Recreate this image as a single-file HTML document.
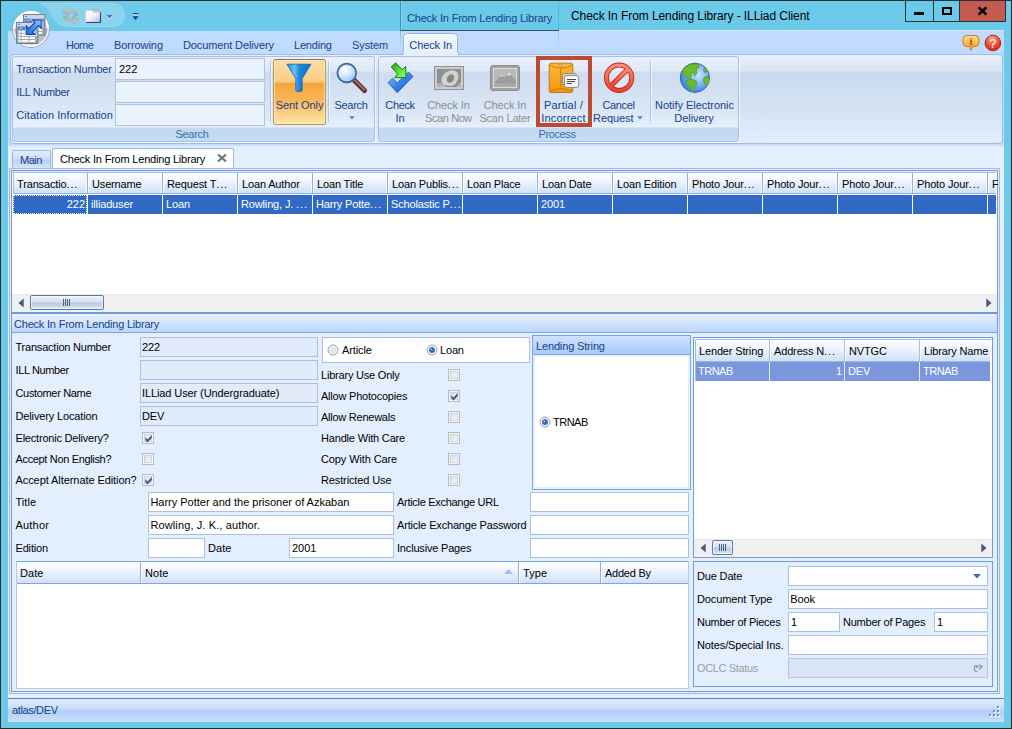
<!DOCTYPE html>
<html><head><meta charset="utf-8"><title>Check In From Lending Library - ILLiad Client</title>
<style>
html,body{margin:0;padding:0;}
body{width:1012px;height:729px;overflow:hidden;background:#6bcaea;font-family:"Liberation Sans",sans-serif;font-size:11px;}
#win{position:relative;width:1012px;height:729px;overflow:hidden;background:#6bcaea;}
#win div,#win svg{position:absolute;box-sizing:border-box;}
.t{overflow:visible;}

</style></head><body>
<div id="win">
<div  style="left:0px;top:0px;width:1012px;height:729px;border:1px solid #2b2b2b;background:#6bcaea;"></div>
<div class="t" style="left:571px;top:8.0px;height:16px;line-height:16px;font-size:12px;color:#000;letter-spacing:-0.08px;white-space:nowrap;">Check In From Lending Library - ILLiad Client</div>
<div  style="left:400px;top:1px;width:1px;height:30px;background:#3f8fb0;"></div>
<div  style="left:401px;top:1px;width:1px;height:29px;background:#8ad6f0;"></div>
<div class="t" style="left:407px;top:10.0px;height:16px;line-height:16px;font-size:11px;color:#15428b;letter-spacing:-0.204px;white-space:nowrap;">Check In From Lending Library</div>
<div  style="left:905px;top:0px;width:29px;height:22px;border:1px solid #25323a;background:#6bcaea;"></div>
<div  style="left:933px;top:0px;width:27px;height:22px;border:1px solid #25323a;border-left:none;background:#6bcaea;"></div>
<div  style="left:959px;top:0px;width:47px;height:22px;border:1px solid #25323a;border-left:none;background:#c55a50;"></div>
<div  style="left:933px;top:1px;width:1px;height:20px;background:#25323a;"></div>
<div  style="left:959px;top:1px;width:1px;height:20px;background:#25323a;"></div>
<div  style="left:914px;top:12px;width:10px;height:3px;background:#000;"></div>
<div  style="left:942px;top:7px;width:10px;height:8px;border:2px solid #000;border-top-width:2px;"></div>
<svg style="left:977px;top:6px;" width="11" height="10" viewBox="0 0 11 10"><path d="M1.600 1.300 L9.400 8.700 M9.400 1.300 L1.600 8.700" stroke="#000" stroke-width="2.500" fill="none"/></svg>
<svg style="left:40px;top:2px;" width="92" height="27" viewBox="0 0 92 27"><path d="M0 1.500 H72 Q84.500 1.500 84.500 13 Q84.500 24.500 72 24.500 H30 Q17 24.500 12 13 Q8 4 0 1.500 Z" fill="#8ad3ed" stroke="#98d9f0" stroke-width="1"/></svg>
<svg style="left:62px;top:7px;" width="18" height="18" viewBox="0 0 18 18"><defs><linearGradient id="rg" x1="0" y1="0" x2="0" y2="1"><stop offset="0" stop-color="#d6d6d6"/><stop offset="1" stop-color="#a4a4a4"/></linearGradient></defs><path d="M0.6 5.6 L6.2 0.8 L6.2 3 Q13.800 1.800 16 8.200 L13.200 8.600 Q11.200 4.800 6.200 5.600 L6.200 8.600 Z" fill="url(#rg)" stroke="#9a9a9a" stroke-width="0.5"/><path transform="rotate(180 8.700 8.900)" d="M0.6 5.6 L6.2 0.8 L6.2 3 Q13.800 1.800 16 8.200 L13.200 8.600 Q11.200 4.800 6.200 5.600 L6.200 8.600 Z" fill="url(#rg)" stroke="#9a9a9a" stroke-width="0.5"/></svg>
<svg style="left:85px;top:9px;" width="17" height="15" viewBox="0 0 17 15"><defs><linearGradient id="fg" x1="0" y1="0" x2="1" y2="1"><stop offset="0" stop-color="#ffffff"/><stop offset="0.45" stop-color="#f4f6fc"/><stop offset="1" stop-color="#aab8dc"/></linearGradient></defs>
<rect x="8" y="0.8" width="6.500" height="3.400" fill="#c4c6cc" stroke="#9a9ea8" stroke-width="0.6"/>
<path d="M0.6 1.600 H7.400 L8.400 3.400 H15.400 V13.400 H0.600 Z" fill="url(#fg)"/>
<path d="M0.6 13.500 H15.500 V3.400" fill="none" stroke="#33447a" stroke-width="1.100"/><path d="M0.6 13.500 V1.600 H7.400" fill="none" stroke="#c9d2ea" stroke-width="0.8"/></svg>
<svg style="left:106px;top:14px;" width="7" height="6" viewBox="0 0 7 6"><path d="M0.6 1 H6.400 L3.500 4.600 Z" fill="#4678b8"/><path d="M0.8 2.200 L3.500 5.600 L6.200 2.200" fill="none" stroke="#d8eefa" stroke-width="0.7"/></svg>
<svg style="left:132px;top:12px;" width="7" height="9" viewBox="0 0 7 9"><rect x="0.8" y="1" width="5.400" height="1.400" fill="#1b3a8b"/><rect x="0.8" y="2.400" width="5.400" height="1" fill="#e8f6ff"/><path d="M0.4 4.300 H6.600 L3.500 7.900 Z" fill="#1b3a8b"/></svg>
<div  style="left:8px;top:31px;width:996px;height:24px;background:#bfdbff;"></div>
<div  style="left:401px;top:30px;width:158px;height:1px;background:#2f5563;"></div>
<div  style="left:559px;top:30px;width:445px;height:1px;background:#cfeaf8;"></div>
<div  style="left:558px;top:2px;width:1px;height:28px;background:#58b6da;"></div>
<div  style="left:558px;top:31px;width:1px;height:20px;background:linear-gradient(#9cc0ee,#bfdbff);"></div>
<div  style="left:400px;top:31px;width:1px;height:20px;background:linear-gradient(#8fb4e6,#bfdbff);"></div>
<div class="t" style="left:66px;top:37.0px;height:16px;line-height:16px;font-size:11px;color:#15428b;letter-spacing:-0.5px;white-space:nowrap;">Home</div>
<div class="t" style="left:114px;top:37.0px;height:16px;line-height:16px;font-size:11px;color:#15428b;letter-spacing:-0.066px;white-space:nowrap;">Borrowing</div>
<div class="t" style="left:183px;top:37.0px;height:16px;line-height:16px;font-size:11px;color:#15428b;letter-spacing:-0.12px;white-space:nowrap;">Document Delivery</div>
<div class="t" style="left:294px;top:37.0px;height:16px;line-height:16px;font-size:11px;color:#15428b;letter-spacing:-0.193px;white-space:nowrap;">Lending</div>
<div class="t" style="left:352px;top:37.0px;height:16px;line-height:16px;font-size:11px;color:#15428b;letter-spacing:-0.078px;white-space:nowrap;">System</div>
<svg style="left:400px;top:32px;" width="62" height="23" viewBox="0 0 62 23"><defs><linearGradient id="tb" x1="0" y1="0" x2="0" y2="1"><stop offset="0" stop-color="#f4f8fe"/><stop offset="1" stop-color="#e3edfa"/></linearGradient></defs>
<path d="M0.5 22.500 Q3.500 22 3.500 18 V5.500 Q3.500 1.500 7.500 1.500 H53.500 Q57.500 1.500 57.500 5.500 V18 Q57.500 22 60.500 22.500 V23 H0.500 Z" fill="url(#tb)" stroke="#8db2e3" stroke-width="1"/>
<path d="M4.500 18 V6 Q4.500 2.500 8 2.500 H53 Q56.500 2.500 56.500 6 V18" fill="none" stroke="#ffffff" stroke-width="1" opacity="0.9"/></svg>
<div class="t" style="left:409.3px;top:37.0px;height:16px;line-height:16px;font-size:11px;color:#15428b;letter-spacing:-0.089px;white-space:nowrap;">Check In</div>
<svg style="left:961px;top:33px;" width="20" height="20" viewBox="0 0 20 20"><defs><linearGradient id="ig" x1="0" y1="0" x2="0" y2="1"><stop offset="0" stop-color="#ffe09a"/><stop offset="0.5" stop-color="#fbb848"/><stop offset="1" stop-color="#f0901e"/></linearGradient></defs>
<path d="M6 2.500 H14 Q18 2.500 18 6.500 V9.500 Q18 13.500 14 13.500 H12.500 L9.300 17.600 L9 13.500 H6 Q2 13.500 2 9.500 V6.500 Q2 2.500 6 2.500 Z" fill="url(#ig)" stroke="#d07a1c" stroke-width="1"/>
<text x="10" y="12" font-family="Liberation Serif,serif" font-weight="bold" font-size="11" fill="#b8480e" text-anchor="middle">i</text></svg>
<svg style="left:984px;top:34px;" width="18" height="18" viewBox="0 0 18 18"><defs><radialGradient id="hg" cx="0.45" cy="0.25" r="0.85"><stop offset="0" stop-color="#ffa488"/><stop offset="0.55" stop-color="#ea4a30"/><stop offset="1" stop-color="#c8200e"/></radialGradient></defs>
<circle cx="8.900" cy="9" r="7.800" fill="url(#hg)" stroke="#b02a18" stroke-width="1"/>
<text x="8.900" y="13.800" font-family="Liberation Sans,sans-serif" font-size="13" fill="#fff" text-anchor="middle">?</text></svg>
<div  style="left:8px;top:54px;width:996px;height:92px;background:#bfdbff;"></div>
<div  style="left:10px;top:54px;width:993px;height:90px;border:1px solid #9dbbe6;border-radius:4px;background:linear-gradient(#e6eef9 0px,#dbe6f4 16px,#c8d9ed 17px,#d6e4f5 60px,#e4efff 90px);"></div>
<div  style="left:404px;top:54px;width:54px;height:1px;background:#e4edfa;"></div>
<div  style="left:8px;top:145px;width:996px;height:577px;background:linear-gradient(#c9dcf5 0px,#e3efff 2px);"></div>
<div  style="left:12px;top:56px;width:363px;height:86px;border:1px solid #a8c0e0;border-radius:3px;background:linear-gradient(#e8f0fb 0px,#dfe9f6 14px,#cddcef 15px,#dbe7f6 55px,#e6f0fd 70px,#c3d9f2 71px,#c6dbf4 85px);box-shadow:1px 1px 0 rgba(255,255,255,0.7);"></div>
<div class="t" style="left:92.0px;top:126.0px;height:16px;line-height:16px;font-size:11px;color:#3e6aaa;letter-spacing:-0.312px;white-space:nowrap;width:200px;text-align:center;">Search</div>
<div  style="left:378px;top:56px;width:361px;height:86px;border:1px solid #a8c0e0;border-radius:3px;background:linear-gradient(#e8f0fb 0px,#dfe9f6 14px,#cddcef 15px,#dbe7f6 55px,#e6f0fd 70px,#c3d9f2 71px,#c6dbf4 85px);box-shadow:1px 1px 0 rgba(255,255,255,0.7);"></div>
<div class="t" style="left:457.0px;top:126.0px;height:16px;line-height:16px;font-size:11px;color:#3e6aaa;letter-spacing:-0.375px;white-space:nowrap;width:200px;text-align:center;">Process</div>
<div class="t" style="left:16.3px;top:61.0px;height:16px;line-height:16px;font-size:11px;color:#15428b;letter-spacing:-0.215px;white-space:nowrap;">Transaction Number</div>
<div  style="left:115px;top:58px;width:150px;height:22px;border:1px solid #adc3e2;background:#eaf2fc;"></div>
<div class="t" style="left:16.3px;top:84.0px;height:16px;line-height:16px;font-size:11px;color:#15428b;letter-spacing:-0.385px;white-space:nowrap;">ILL Number</div>
<div  style="left:115px;top:81px;width:150px;height:22px;border:1px solid #adc3e2;background:#eaf2fc;"></div>
<div class="t" style="left:16.3px;top:107.0px;height:16px;line-height:16px;font-size:11px;color:#15428b;letter-spacing:0.064px;white-space:nowrap;">Citation Information</div>
<div  style="left:115px;top:104px;width:150px;height:22px;border:1px solid #adc3e2;background:#eaf2fc;"></div>
<div class="t" style="left:119px;top:61.0px;height:16px;line-height:16px;font-size:11px;color:#000;letter-spacing:0px;white-space:nowrap;">222</div>
<div  style="left:270px;top:61px;width:1px;height:61px;background:#b0c6e4;"></div>
<div  style="left:271px;top:61px;width:1px;height:61px;background:#eef4fd;"></div>
<div  style="left:328px;top:61px;width:1px;height:61px;background:#b0c6e4;"></div>
<div  style="left:329px;top:61px;width:1px;height:61px;background:#eef4fd;"></div>
<div  style="left:273px;top:59px;width:53px;height:66px;border:1px solid #b89a5c;border-top-color:#8e7a56;border-radius:3px;background:linear-gradient(#fbdcaa 0px,#f9cd86 22px,#f8a53c 23px,#f9b559 40px,#fde6a6 64px);box-shadow:inset 0 0 0 1px rgba(255,240,200,0.55);"></div>
<svg style="left:286px;top:63px;" width="26" height="30" viewBox="0 0 26 30"><defs><linearGradient id="fn" x1="0" y1="0" x2="1" y2="0"><stop offset="0" stop-color="#1c8be0"/><stop offset="0.32" stop-color="#6fc0f8"/><stop offset="0.5" stop-color="#1c86dc"/><stop offset="1" stop-color="#0d72cf"/></linearGradient></defs>
<path d="M1 1.200 H25 L16.200 15.500 V27.800 Q13 29.600 9.800 27.800 V15.500 Z" fill="url(#fn)" stroke="#0a63b8" stroke-width="0.8"/></svg>
<div class="t" style="left:199.5px;top:97.0px;height:16px;line-height:16px;font-size:11px;color:#15428b;letter-spacing:-0.064px;white-space:nowrap;width:200px;text-align:center;">Sent Only</div>
<svg style="left:334px;top:61px;" width="36" height="36" viewBox="0 0 36 36"><defs><radialGradient id="lg" cx="0.35" cy="0.3" r="0.8"><stop offset="0" stop-color="#ffffff"/><stop offset="0.45" stop-color="#d6eafc"/><stop offset="1" stop-color="#86bdf0"/></radialGradient></defs>
<path d="M20.5 19.500 L30.500 29.500" stroke="#5c2a26" stroke-width="5" stroke-linecap="round"/><path d="M21 19.500 L30.300 28.800" stroke="#a86a62" stroke-width="2" stroke-linecap="round"/>
<circle cx="12.8" cy="12" r="9.300" fill="url(#lg)" stroke="#3a66a4" stroke-width="1.900"/><circle cx="12.800" cy="12" r="8" fill="none" stroke="#bcd8f6" stroke-width="0.8"/></svg>
<div class="t" style="left:251px;top:97.0px;height:16px;line-height:16px;font-size:11px;color:#15428b;letter-spacing:-0.312px;white-space:nowrap;width:200px;text-align:center;">Search</div>
<svg style="left:349px;top:116px;" width="6" height="4" viewBox="0 0 6 4"><path d="M0.3 0.3 H5.700 L3 3.600 Z" fill="#5d7fb0"/></svg>
<svg style="left:385px;top:60px;" width="30" height="35" viewBox="0 0 30 35"><defs><linearGradient id="ck" x1="0" y1="0" x2="1" y2="1"><stop offset="0" stop-color="#8cc4fa"/><stop offset="0.5" stop-color="#3585e8"/><stop offset="1" stop-color="#134fc0"/></linearGradient>
<linearGradient id="ga" x1="0" y1="0" x2="1" y2="1"><stop offset="0" stop-color="#1f9a14"/><stop offset="0.55" stop-color="#5fe23c"/><stop offset="1" stop-color="#a8f87c"/></linearGradient></defs>
<path d="M3 22.700 L7.500 18.200 L12.300 22.700 L23.500 12 L27.900 16.600 L12.300 32.700 Z" fill="url(#ck)" stroke="#1a55c0" stroke-width="0.8" stroke-linejoin="round"/>
<path d="M6.1 7.100 L10.600 2.800 L17.200 9.600 L20.800 6.500 L20.800 17.600 L9.700 17.600 L12.800 14 Z" fill="url(#ga)" stroke="#17850e" stroke-width="1" stroke-linejoin="round"/></svg>
<div class="t" style="left:300px;top:97.0px;height:16px;line-height:16px;font-size:11px;color:#15428b;letter-spacing:-0.372px;white-space:nowrap;width:200px;text-align:center;">Check</div>
<div class="t" style="left:300px;top:110.0px;height:16px;line-height:16px;font-size:11px;color:#15428b;letter-spacing:-0.2px;white-space:nowrap;width:200px;text-align:center;">In</div>
<svg style="left:434px;top:66px;" width="30" height="24" viewBox="0 0 30 24"><rect x="0.5" y="0.5" width="29" height="23" fill="#cdcdcd" stroke="#929292"/><rect x="3" y="3" width="24" height="18" fill="#8f8f8f"/>
<path d="M9 19 Q5 12 11 7 Q17 2 23 6 Q26 10 23 15 Q22 19 17 20 Z" fill="#d2d2d2"/><ellipse cx="16.500" cy="12.500" rx="3.300" ry="4.400" transform="rotate(25 16.5 12.5)" fill="#858585"/><path d="M3 18 Q8 15 12 21 H3 Z M22 21 L27 16 V21 Z" fill="#b4b4b4"/></svg>
<div class="t" style="left:348.5px;top:97.0px;height:16px;line-height:16px;font-size:11px;color:#8d8d8d;letter-spacing:-0.089px;white-space:nowrap;width:200px;text-align:center;">Check In</div>
<div class="t" style="left:348.5px;top:110.0px;height:16px;line-height:16px;font-size:11px;color:#8d8d8d;letter-spacing:-0.42px;white-space:nowrap;width:200px;text-align:center;">Scan Now</div>
<svg style="left:490px;top:65px;" width="30" height="26" viewBox="0 0 30 26"><rect x="0.5" y="0.5" width="29" height="25" rx="2.500" fill="#a2a2a2" stroke="#8c8c8c"/><rect x="3.500" y="3.500" width="23" height="19" fill="#b9b9b9" stroke="#dcdcdc"/>
<path d="M4 19 L11 9 L14.500 13 L19 7 L26 16 V22 H4 Z" fill="#9d9d9d"/><path d="M11 9 L13 11.500 L9.500 11.500 Z M19 7 L21.500 10.500 L17 10.500 Z" fill="#e2e2e2"/><rect x="4" y="18.500" width="22" height="3.500" fill="#aaaaaa"/></svg>
<div class="t" style="left:405px;top:97.0px;height:16px;line-height:16px;font-size:11px;color:#8d8d8d;letter-spacing:-0.089px;white-space:nowrap;width:200px;text-align:center;">Check In</div>
<div class="t" style="left:405px;top:110.0px;height:16px;line-height:16px;font-size:11px;color:#8d8d8d;letter-spacing:-0.211px;white-space:nowrap;width:200px;text-align:center;">Scan Later</div>
<div  style="left:536px;top:56px;width:56px;height:71px;border:4px solid #be4a32;"></div>
<svg style="left:548px;top:62px;" width="32" height="32" viewBox="0 0 32 32"><defs><linearGradient id="ev" x1="0" y1="0" x2="0" y2="1"><stop offset="0" stop-color="#fbb836"/><stop offset="1" stop-color="#f5960c"/></linearGradient></defs>
<rect x="1.200" y="1.200" width="23.600" height="29.300" rx="2" fill="url(#ev)" stroke="#c8780c" stroke-width="1"/>
<path d="M1.800 3 Q12.700 9.500 24.200 3" fill="none" stroke="#c8780c" stroke-width="0.9"/><path d="M1.800 29 Q12.700 24.500 24.200 29" fill="none" stroke="#c8780c" stroke-width="0.9"/><path d="M12.700 6.300 V26.600" stroke="#c8780c" stroke-width="0.9"/>
<circle cx="12.700" cy="3.300" r="1.100" fill="#fff" stroke="#6a3c08" stroke-width="0.5"/>
<rect x="14.500" y="11.500" width="14" height="11.500" rx="2" fill="#d4d4d4" stroke="#8c8c8c"/><rect x="16.500" y="13.600" width="14.200" height="11.800" rx="2" fill="#f8f8f8" stroke="#8a8a8a"/>
<path d="M19 17.500 H28 M19 19.500 H27 M19 21.500 H24" stroke="#4a4a4a" stroke-width="1"/></svg>
<div class="t" style="left:463.5px;top:97.0px;height:16px;line-height:16px;font-size:11px;color:#15428b;letter-spacing:0.213px;white-space:nowrap;width:200px;text-align:center;">Partial /</div>
<div class="t" style="left:463.5px;top:110.0px;height:16px;line-height:16px;font-size:11px;color:#15428b;letter-spacing:0.2px;white-space:nowrap;width:200px;text-align:center;">Incorrect</div>
<svg style="left:602px;top:61px;" width="34" height="34" viewBox="0 0 34 34"><defs><linearGradient id="cg" x1="0" y1="0" x2="0" y2="1"><stop offset="0" stop-color="#f7907c"/><stop offset="1" stop-color="#e8452e"/></linearGradient></defs>
<circle cx="17.100" cy="16.800" r="12.700" fill="rgba(255,255,255,0.25)" stroke="#c8281c" stroke-width="5"/><path d="M8.300 25.600 L25.900 8" stroke="#c8281c" stroke-width="5"/>
<circle cx="17.100" cy="16.800" r="12.700" fill="none" stroke="url(#cg)" stroke-width="3.200"/><path d="M8.300 25.600 L25.900 8" stroke="url(#cg)" stroke-width="3.200"/></svg>
<div class="t" style="left:518.5px;top:97.0px;height:16px;line-height:16px;font-size:11px;color:#15428b;letter-spacing:-0.35px;white-space:nowrap;width:200px;text-align:center;">Cancel</div>
<div class="t" style="left:593px;top:110.0px;height:16px;line-height:16px;font-size:11px;color:#15428b;letter-spacing:-0.064px;white-space:nowrap;">Request</div>
<svg style="left:637px;top:116px;" width="6" height="4" viewBox="0 0 6 4"><path d="M0.3 0.3 H5.700 L3 3.600 Z" fill="#5d7fb0"/></svg>
<div  style="left:650px;top:61px;width:1px;height:61px;background:#b0c6e4;"></div>
<div  style="left:651px;top:61px;width:1px;height:61px;background:#eef4fd;"></div>
<svg style="left:679px;top:62px;" width="33" height="33" viewBox="0 0 33 33"><defs><radialGradient id="gl" cx="0.62" cy="0.4" r="0.75"><stop offset="0" stop-color="#cfe6ff"/><stop offset="0.5" stop-color="#6aaef4"/><stop offset="1" stop-color="#2a6ee0"/></radialGradient><clipPath id="gc"><circle cx="15.900" cy="15.800" r="14.600"/></clipPath></defs>
<circle cx="15.900" cy="15.800" r="14.600" fill="url(#gl)" stroke="#2a5fd0" stroke-width="1"/>
<g clip-path="url(#gc)" fill="#6cba2e" stroke="#3f9a1e" stroke-width="0.7" stroke-linejoin="round">
<polygon points="3.6,7.0 10.7,2.3 19.0,1.7 20.2,5.3 17.2,7.0 17.8,11.8 15.4,14.2 14.8,10.0 11.9,11.8 11.9,15.9 8.3,16.500 5.900,13.600 3.0,11.8"/>
<polygon points="8.3,18.3 11.9,17.1 17.2,18.9 17.8,22.500 15.400,25.400 15.200,29.600 12.500,29.600 11.600,25.400 7.700,23.100 7.100,20.100"/>
<polygon points="24.3,7.0 26.7,5.900 28.500,9.400 25.500,10.600"/>
<polygon points="26.1,14.8 29.7,14.2 30.900,19.500 27.900,23.600 24.900,20.700 24.300,17.100"/></g></svg>
<div class="t" style="left:594.5px;top:97.0px;height:16px;line-height:16px;font-size:11px;color:#15428b;letter-spacing:-0.03px;white-space:nowrap;width:200px;text-align:center;">Notify Electronic</div>
<div class="t" style="left:594px;top:110.0px;height:16px;line-height:16px;font-size:11px;color:#15428b;letter-spacing:-0.048px;white-space:nowrap;width:200px;text-align:center;">Delivery</div>
<svg style="left:10px;top:8px;" width="42" height="42" viewBox="0 0 42 42"><defs><linearGradient id="ab" x1="0" y1="0" x2="0" y2="1"><stop offset="0" stop-color="#ffffff"/><stop offset="0.46" stop-color="#e4e9ef"/><stop offset="0.5" stop-color="#a9b3c1"/><stop offset="0.8" stop-color="#bcc5d1"/><stop offset="1" stop-color="#eef1f5"/></linearGradient>
<linearGradient id="ar" x1="0" y1="1" x2="1" y2="0"><stop offset="0" stop-color="#1769d6"/><stop offset="0.5" stop-color="#3f97ee"/><stop offset="1" stop-color="#8ccdfa"/></linearGradient></defs>
<circle cx="21" cy="21" r="18.5" fill="url(#ab)" stroke="#9aa6b6" stroke-width="1"/>
<circle cx="21" cy="21" r="17.2" fill="none" stroke="#ffffff" stroke-width="1.4" opacity="0.85"/><rect x="13.5" y="6.5" width="21.5" height="20.5" fill="#9ea7b4" stroke="#76828f" stroke-width="1"/><rect x="14.0" y="7.0" width="20.5" height="3.2" fill="#cbd5f5"/><rect x="15.0" y="7.8" width="2" height="0.9" fill="#5b6680"/><rect x="15.0" y="11.1" width="18.5" height="2.600" fill="#2c78d4"/><rect x="16.0" y="11.7" width="4" height="1.2" fill="#8cc4f4"/><rect x="15.5" y="14.7" width="2" height="2.100" fill="#fff"/><rect x="18.5" y="14.7" width="6.9" height="2.100" fill="#fff"/><rect x="26.4" y="14.7" width="5.6" height="2.100" fill="#fff"/><rect x="15.5" y="17.8" width="2" height="2.100" fill="#fff"/><rect x="18.5" y="17.8" width="6.9" height="2.100" fill="#fff"/><rect x="26.4" y="17.8" width="5.6" height="2.100" fill="#fff"/><rect x="15.5" y="20.9" width="2" height="2.100" fill="#fff"/><rect x="18.5" y="20.9" width="6.9" height="2.100" fill="#fff"/><rect x="26.4" y="20.9" width="5.6" height="2.100" fill="#fff"/><rect x="15.5" y="24.0" width="2" height="2.100" fill="#fff"/><rect x="18.5" y="24.0" width="6.9" height="2.100" fill="#fff"/><rect x="26.4" y="24.0" width="5.6" height="2.100" fill="#fff"/><rect x="6.5" y="14.5" width="21.5" height="21" fill="#9ea7b4" stroke="#76828f" stroke-width="1"/><rect x="7.0" y="15.0" width="20.5" height="3.2" fill="#cbd5f5"/><rect x="8.0" y="15.8" width="2" height="0.9" fill="#5b6680"/><rect x="8.0" y="19.1" width="18.5" height="2.600" fill="#2c78d4"/><rect x="9.0" y="19.7" width="4" height="1.2" fill="#8cc4f4"/><rect x="8.5" y="22.7" width="2" height="2.100" fill="#fff"/><rect x="11.5" y="22.7" width="6.9" height="2.100" fill="#fff"/><rect x="19.4" y="22.7" width="5.6" height="2.100" fill="#fff"/><rect x="8.5" y="25.8" width="2" height="2.100" fill="#fff"/><rect x="11.5" y="25.8" width="6.9" height="2.100" fill="#fff"/><rect x="19.4" y="25.8" width="5.6" height="2.100" fill="#fff"/><rect x="8.5" y="28.9" width="2" height="2.100" fill="#fff"/><rect x="11.5" y="28.9" width="6.9" height="2.100" fill="#fff"/><rect x="19.4" y="28.9" width="5.6" height="2.100" fill="#fff"/><rect x="8.5" y="32.0" width="2" height="2.100" fill="#fff"/><rect x="11.5" y="32.0" width="6.9" height="2.100" fill="#fff"/><rect x="19.4" y="32.0" width="5.6" height="2.100" fill="#fff"/><path d="M16.2 17.600 L16.200 26.500 L25.100 26.500 L22.600 24 L28.700 17.900 L31.200 20.400 L31.200 11.900 L22.300 11.900 L24.800 14.400 L18.700 20.500 Z" fill="url(#ar)" stroke="#ffffff" stroke-width="2.200" stroke-linejoin="miter"/>
<path d="M16.2 17.600 L16.200 26.500 L25.100 26.500 L22.600 24 L28.700 17.900 L31.200 20.400 L31.200 11.900 L22.300 11.900 L24.800 14.400 L18.700 20.500 Z" fill="url(#ar)" stroke="#123f9e" stroke-width="1.100" stroke-linejoin="miter"/></svg>
<div  style="left:12px;top:150px;width:39px;height:19px;border:1px solid #9ab8e0;border-bottom:none;border-radius:2px 2px 0 0;background:linear-gradient(#e2edfc 0%,#d0e1f9 40%,#b9d2f4 55%,#c6dbf7 75%,#dbe8fb 100%);"></div>
<div class="t" style="left:20px;top:152.0px;height:16px;line-height:16px;font-size:11px;color:#15428b;letter-spacing:-0.481px;white-space:nowrap;">Main</div>
<div  style="left:52px;top:148px;width:182px;height:22px;border:1px solid #9ab8e0;border-bottom:none;border-radius:2px 2px 0 0;background:#fdfeff;"></div>
<div class="t" style="left:60px;top:151.0px;height:16px;line-height:16px;font-size:11px;color:#000;letter-spacing:-0.204px;white-space:nowrap;">Check In From Lending Library</div>
<svg style="left:216px;top:153px;" width="12" height="10" viewBox="0 0 12 10"><path d="M2 1.500 L10 8.500 M10 1.500 L2 8.500" stroke="#757575" stroke-width="2.3" fill="none"/></svg>
<div  style="left:9px;top:168px;width:991px;height:526px;border:1px solid #a9b9d4;background:#e3efff;"></div>
<div  style="left:11px;top:170px;width:987px;height:522px;border:1px solid #6f9bd8;background:#e3efff;"></div>
<div  style="left:12px;top:171px;width:985px;height:142px;background:#fff;border-top:1px solid #e3efff;"></div>
<div  style="left:13px;top:172px;width:983px;height:1px;background:#9dbbe6;"></div>
<div  style="left:13px;top:173px;width:983px;height:21px;background:linear-gradient(#fdfeff 0%,#f1f6fe 35%,#dce9fb 75%,#cfe0f8 100%);border-bottom:1px solid #8fb0e0;border-left:1px solid #9dbbe6;"></div>
<div  style="left:13px;top:195px;width:983px;height:19px;background:#316ac5;"></div>
<div class="t" style="left:17px;top:176.0px;height:16px;line-height:16px;font-size:11px;color:#000;letter-spacing:-0.15px;white-space:nowrap;overflow:hidden;width:70px;text-align:left;">Transactio<span style="letter-spacing:0.9px">...</span></div>
<div class="t" style="left:15px;top:196.0px;height:16px;line-height:16px;font-size:11px;color:#fff;letter-spacing:0px;white-space:nowrap;width:70px;text-align:right;">222</div>
<div  style="left:87px;top:173px;width:1px;height:21px;background:#8fb0e0;"></div>
<div  style="left:88px;top:173px;width:1px;height:20px;background:#fff;"></div>
<div  style="left:86px;top:173px;width:1px;height:20px;background:#f4f8ff;"></div>
<div  style="left:87px;top:195px;width:1px;height:19px;background:#fff;"></div>
<div class="t" style="left:92px;top:176.0px;height:16px;line-height:16px;font-size:11px;color:#000;letter-spacing:-0.15px;white-space:nowrap;overflow:hidden;width:70px;text-align:left;">Username</div>
<div class="t" style="left:91px;top:196.0px;height:16px;line-height:16px;font-size:11px;color:#fff;letter-spacing:-0.15px;white-space:nowrap;overflow:hidden;width:70px;text-align:left;">illiaduser</div>
<div  style="left:162px;top:173px;width:1px;height:21px;background:#8fb0e0;"></div>
<div  style="left:163px;top:173px;width:1px;height:20px;background:#fff;"></div>
<div  style="left:161px;top:173px;width:1px;height:20px;background:#f4f8ff;"></div>
<div  style="left:162px;top:195px;width:1px;height:19px;background:#fff;"></div>
<div class="t" style="left:167px;top:176.0px;height:16px;line-height:16px;font-size:11px;color:#000;letter-spacing:-0.15px;white-space:nowrap;overflow:hidden;width:70px;text-align:left;">Request T<span style="letter-spacing:0.9px">...</span></div>
<div class="t" style="left:166px;top:196.0px;height:16px;line-height:16px;font-size:11px;color:#fff;letter-spacing:-0.15px;white-space:nowrap;overflow:hidden;width:70px;text-align:left;">Loan</div>
<div  style="left:237px;top:173px;width:1px;height:21px;background:#8fb0e0;"></div>
<div  style="left:238px;top:173px;width:1px;height:20px;background:#fff;"></div>
<div  style="left:236px;top:173px;width:1px;height:20px;background:#f4f8ff;"></div>
<div  style="left:237px;top:195px;width:1px;height:19px;background:#fff;"></div>
<div class="t" style="left:242px;top:176.0px;height:16px;line-height:16px;font-size:11px;color:#000;letter-spacing:-0.15px;white-space:nowrap;overflow:hidden;width:70px;text-align:left;">Loan Author</div>
<div class="t" style="left:241px;top:196.0px;height:16px;line-height:16px;font-size:11px;color:#fff;letter-spacing:-0.15px;white-space:nowrap;overflow:hidden;width:70px;text-align:left;">Rowling, J. <span style="letter-spacing:0.9px">...</span></div>
<div  style="left:312px;top:173px;width:1px;height:21px;background:#8fb0e0;"></div>
<div  style="left:313px;top:173px;width:1px;height:20px;background:#fff;"></div>
<div  style="left:311px;top:173px;width:1px;height:20px;background:#f4f8ff;"></div>
<div  style="left:312px;top:195px;width:1px;height:19px;background:#fff;"></div>
<div class="t" style="left:317px;top:176.0px;height:16px;line-height:16px;font-size:11px;color:#000;letter-spacing:-0.15px;white-space:nowrap;overflow:hidden;width:70px;text-align:left;">Loan Title</div>
<div class="t" style="left:316px;top:196.0px;height:16px;line-height:16px;font-size:11px;color:#fff;letter-spacing:-0.15px;white-space:nowrap;overflow:hidden;width:70px;text-align:left;">Harry Potte<span style="letter-spacing:0.9px">...</span></div>
<div  style="left:387px;top:173px;width:1px;height:21px;background:#8fb0e0;"></div>
<div  style="left:388px;top:173px;width:1px;height:20px;background:#fff;"></div>
<div  style="left:386px;top:173px;width:1px;height:20px;background:#f4f8ff;"></div>
<div  style="left:387px;top:195px;width:1px;height:19px;background:#fff;"></div>
<div class="t" style="left:392px;top:176.0px;height:16px;line-height:16px;font-size:11px;color:#000;letter-spacing:-0.15px;white-space:nowrap;overflow:hidden;width:70px;text-align:left;">Loan Publis<span style="letter-spacing:0.9px">...</span></div>
<div class="t" style="left:391px;top:196.0px;height:16px;line-height:16px;font-size:11px;color:#fff;letter-spacing:-0.15px;white-space:nowrap;overflow:hidden;width:70px;text-align:left;">Scholastic P<span style="letter-spacing:0.9px">...</span></div>
<div  style="left:462px;top:173px;width:1px;height:21px;background:#8fb0e0;"></div>
<div  style="left:463px;top:173px;width:1px;height:20px;background:#fff;"></div>
<div  style="left:461px;top:173px;width:1px;height:20px;background:#f4f8ff;"></div>
<div  style="left:462px;top:195px;width:1px;height:19px;background:#fff;"></div>
<div class="t" style="left:467px;top:176.0px;height:16px;line-height:16px;font-size:11px;color:#000;letter-spacing:-0.15px;white-space:nowrap;overflow:hidden;width:70px;text-align:left;">Loan Place</div>
<div  style="left:537px;top:173px;width:1px;height:21px;background:#8fb0e0;"></div>
<div  style="left:538px;top:173px;width:1px;height:20px;background:#fff;"></div>
<div  style="left:536px;top:173px;width:1px;height:20px;background:#f4f8ff;"></div>
<div  style="left:537px;top:195px;width:1px;height:19px;background:#fff;"></div>
<div class="t" style="left:542px;top:176.0px;height:16px;line-height:16px;font-size:11px;color:#000;letter-spacing:-0.15px;white-space:nowrap;overflow:hidden;width:70px;text-align:left;">Loan Date</div>
<div class="t" style="left:541px;top:196.0px;height:16px;line-height:16px;font-size:11px;color:#fff;letter-spacing:-0.15px;white-space:nowrap;overflow:hidden;width:70px;text-align:left;">2001</div>
<div  style="left:612px;top:173px;width:1px;height:21px;background:#8fb0e0;"></div>
<div  style="left:613px;top:173px;width:1px;height:20px;background:#fff;"></div>
<div  style="left:611px;top:173px;width:1px;height:20px;background:#f4f8ff;"></div>
<div  style="left:612px;top:195px;width:1px;height:19px;background:#fff;"></div>
<div class="t" style="left:617px;top:176.0px;height:16px;line-height:16px;font-size:11px;color:#000;letter-spacing:-0.15px;white-space:nowrap;overflow:hidden;width:70px;text-align:left;">Loan Edition</div>
<div  style="left:687px;top:173px;width:1px;height:21px;background:#8fb0e0;"></div>
<div  style="left:688px;top:173px;width:1px;height:20px;background:#fff;"></div>
<div  style="left:686px;top:173px;width:1px;height:20px;background:#f4f8ff;"></div>
<div  style="left:687px;top:195px;width:1px;height:19px;background:#fff;"></div>
<div class="t" style="left:692px;top:176.0px;height:16px;line-height:16px;font-size:11px;color:#000;letter-spacing:-0.15px;white-space:nowrap;overflow:hidden;width:70px;text-align:left;">Photo Jour<span style="letter-spacing:0.9px">...</span></div>
<div  style="left:762px;top:173px;width:1px;height:21px;background:#8fb0e0;"></div>
<div  style="left:763px;top:173px;width:1px;height:20px;background:#fff;"></div>
<div  style="left:761px;top:173px;width:1px;height:20px;background:#f4f8ff;"></div>
<div  style="left:762px;top:195px;width:1px;height:19px;background:#fff;"></div>
<div class="t" style="left:767px;top:176.0px;height:16px;line-height:16px;font-size:11px;color:#000;letter-spacing:-0.15px;white-space:nowrap;overflow:hidden;width:70px;text-align:left;">Photo Jour<span style="letter-spacing:0.9px">...</span></div>
<div  style="left:837px;top:173px;width:1px;height:21px;background:#8fb0e0;"></div>
<div  style="left:838px;top:173px;width:1px;height:20px;background:#fff;"></div>
<div  style="left:836px;top:173px;width:1px;height:20px;background:#f4f8ff;"></div>
<div  style="left:837px;top:195px;width:1px;height:19px;background:#fff;"></div>
<div class="t" style="left:842px;top:176.0px;height:16px;line-height:16px;font-size:11px;color:#000;letter-spacing:-0.15px;white-space:nowrap;overflow:hidden;width:70px;text-align:left;">Photo Jour<span style="letter-spacing:0.9px">...</span></div>
<div  style="left:912px;top:173px;width:1px;height:21px;background:#8fb0e0;"></div>
<div  style="left:913px;top:173px;width:1px;height:20px;background:#fff;"></div>
<div  style="left:911px;top:173px;width:1px;height:20px;background:#f4f8ff;"></div>
<div  style="left:912px;top:195px;width:1px;height:19px;background:#fff;"></div>
<div class="t" style="left:917px;top:176.0px;height:16px;line-height:16px;font-size:11px;color:#000;letter-spacing:-0.15px;white-space:nowrap;overflow:hidden;width:70px;text-align:left;">Photo Jour<span style="letter-spacing:0.9px">...</span></div>
<div  style="left:987px;top:173px;width:1px;height:21px;background:#8fb0e0;"></div>
<div  style="left:988px;top:173px;width:1px;height:20px;background:#fff;"></div>
<div  style="left:986px;top:173px;width:1px;height:20px;background:#f4f8ff;"></div>
<div  style="left:987px;top:195px;width:1px;height:19px;background:#fff;"></div>
<div class="t" style="left:992px;top:176.0px;height:16px;line-height:16px;font-size:11px;color:#000;letter-spacing:-0.15px;white-space:nowrap;overflow:hidden;width:6px;text-align:left;">F</div>
<div  style="left:13px;top:195px;width:74px;height:19px;border:1px dotted #fff;"></div>
<div  style="left:12px;top:294px;width:985px;height:18px;background:#f0f0f0;border-top:1px solid #e6e6e6;"></div>
<svg style="left:17.5px;top:297.5px;" width="6" height="10" viewBox="0 0 6 10"><path d="M5.700 0.500 V9.500 L0.500 5 Z" fill="#47597d"/></svg>
<svg style="left:985.5px;top:297.5px;" width="6" height="10" viewBox="0 0 6 10"><path d="M0.300 0.500 V9.500 L5.500 5 Z" fill="#47597d"/></svg>
<div  style="left:30px;top:295px;width:74px;height:15px;border:1px solid #5a78a8;border-radius:2px;background:linear-gradient(#eef2f9,#d7e0ee 45%,#b9c8de 55%,#e1e8f3);box-shadow:inset 0 0 0 1px rgba(255,255,255,0.6);"></div>
<div  style="left:63px;top:299px;width:1px;height:7px;background:#4d6185;"></div>
<div  style="left:65px;top:299px;width:1px;height:7px;background:#4d6185;"></div>
<div  style="left:67px;top:299px;width:1px;height:7px;background:#4d6185;"></div>
<div  style="left:69px;top:299px;width:1px;height:7px;background:#4d6185;"></div>
<div  style="left:12px;top:312px;width:985px;height:2px;background:#6f9bd8;"></div>
<div  style="left:12px;top:314px;width:985px;height:19px;background:linear-gradient(#e6f0ff,#bdd7fb);border-bottom:1px solid #7ea6dc;"></div>
<div class="t" style="left:14px;top:316.0px;height:16px;line-height:16px;font-size:11px;color:#15428b;letter-spacing:-0.204px;white-space:nowrap;">Check In From Lending Library</div>
<div class="t" style="left:15.5px;top:339.0px;height:16px;line-height:16px;font-size:11px;color:#000;letter-spacing:-0.215px;white-space:nowrap;">Transaction Number</div>
<div class="t" style="left:15.5px;top:362.0px;height:16px;line-height:16px;font-size:11px;color:#000;letter-spacing:-0.385px;white-space:nowrap;">ILL Number</div>
<div class="t" style="left:15.5px;top:385.0px;height:16px;line-height:16px;font-size:11px;color:#000;letter-spacing:-0.34px;white-space:nowrap;">Customer Name</div>
<div class="t" style="left:15.5px;top:408.0px;height:16px;line-height:16px;font-size:11px;color:#000;letter-spacing:-0.142px;white-space:nowrap;">Delivery Location</div>
<div class="t" style="left:15.5px;top:430.0px;height:16px;line-height:16px;font-size:11px;color:#000;letter-spacing:-0.205px;white-space:nowrap;">Electronic Delivery?</div>
<div class="t" style="left:15.5px;top:451.0px;height:16px;line-height:16px;font-size:11px;color:#000;letter-spacing:-0.34px;white-space:nowrap;">Accept Non English?</div>
<div class="t" style="left:15.5px;top:472.0px;height:16px;line-height:16px;font-size:11px;color:#000;letter-spacing:-0.072px;white-space:nowrap;">Accept Alternate Edition?</div>
<div  style="left:140px;top:337px;width:178px;height:20px;border:1px solid #abc1de;background:#e1ebf9;"></div>
<div class="t" style="left:142px;top:339.0px;height:16px;line-height:16px;font-size:11px;color:#000;letter-spacing:-0.1px;white-space:nowrap;">222</div>
<div  style="left:140px;top:360px;width:178px;height:20px;border:1px solid #abc1de;background:#e1ebf9;"></div>
<div  style="left:140px;top:383px;width:178px;height:20px;border:1px solid #abc1de;background:#e1ebf9;"></div>
<div class="t" style="left:142px;top:385.0px;height:16px;line-height:16px;font-size:11px;color:#000;letter-spacing:-0.101px;white-space:nowrap;">ILLiad User (Undergraduate)</div>
<div  style="left:140px;top:406px;width:178px;height:20px;border:1px solid #abc1de;background:#e1ebf9;"></div>
<div class="t" style="left:142px;top:408.0px;height:16px;line-height:16px;font-size:11px;color:#000;letter-spacing:-0.1px;white-space:nowrap;">DEV</div>
<div  style="left:142px;top:432px;width:12px;height:12px;border:1px solid #b4bcc8;background:#f4f5f7;"></div>
<div  style="left:144px;top:434px;width:8px;height:8px;border:1px solid #cfd3da;background:linear-gradient(135deg,#dcdfe5,#f6f7f9);"></div>
<svg style="left:143.5px;top:433.5px;" width="9" height="9" viewBox="0 0 9 9"><path d="M1.300 3.300 L3.500 5.600 L7.800 1 V3.900 L3.500 8.400 L1.300 6.100 Z" fill="#44558a"/></svg>
<div  style="left:142px;top:453px;width:12px;height:12px;border:1px solid #b4bcc8;background:#f4f5f7;"></div>
<div  style="left:144px;top:455px;width:8px;height:8px;border:1px solid #cfd3da;background:linear-gradient(135deg,#dcdfe5,#f6f7f9);"></div>
<div  style="left:142px;top:474px;width:12px;height:12px;border:1px solid #b4bcc8;background:#f4f5f7;"></div>
<div  style="left:144px;top:476px;width:8px;height:8px;border:1px solid #cfd3da;background:linear-gradient(135deg,#dcdfe5,#f6f7f9);"></div>
<svg style="left:143.5px;top:475.5px;" width="9" height="9" viewBox="0 0 9 9"><path d="M1.300 3.300 L3.500 5.600 L7.800 1 V3.900 L3.500 8.400 L1.300 6.100 Z" fill="#44558a"/></svg>
<div  style="left:322px;top:337px;width:208px;height:26px;border:1px solid #abc1de;background:#fff;"></div>
<svg style="left:327px;top:344px;" width="12" height="12" viewBox="0 0 12 12"><circle cx="6" cy="6" r="5" fill="#f4f5f7" stroke="#9aa2b0" stroke-width="1"/><circle cx="6" cy="6" r="3.4" fill="#e2e5ea"/></svg>
<div class="t" style="left:342px;top:342.0px;height:16px;line-height:16px;font-size:11px;color:#000;letter-spacing:-0.11px;white-space:nowrap;">Article</div>
<svg style="left:426px;top:344px;" width="12" height="12" viewBox="0 0 12 12"><circle cx="6" cy="6" r="5" fill="#f4f5f7" stroke="#9aa2b0" stroke-width="1"/><circle cx="6" cy="6" r="3.4" fill="#e2e5ea"/><circle cx="6" cy="6" r="2.600" fill="#2f6fd0" stroke="#1d4fa0" stroke-width="0.6"/><circle cx="5.300" cy="5.300" r="0.9" fill="#9cc8ff"/></svg>
<div class="t" style="left:440px;top:342.0px;height:16px;line-height:16px;font-size:11px;color:#000;letter-spacing:-0.161px;white-space:nowrap;">Loan</div>
<div class="t" style="left:321px;top:367.0px;height:16px;line-height:16px;font-size:11px;color:#000;letter-spacing:-0.208px;white-space:nowrap;">Library Use Only</div>
<div  style="left:448px;top:369px;width:12px;height:12px;border:1px solid #b4bcc8;background:#f4f5f7;"></div>
<div  style="left:450px;top:371px;width:8px;height:8px;border:1px solid #cfd3da;background:linear-gradient(135deg,#dcdfe5,#f6f7f9);"></div>
<div class="t" style="left:321px;top:388.0px;height:16px;line-height:16px;font-size:11px;color:#000;letter-spacing:-0.218px;white-space:nowrap;">Allow Photocopies</div>
<div  style="left:448px;top:390px;width:12px;height:12px;border:1px solid #b4bcc8;background:#f4f5f7;"></div>
<div  style="left:450px;top:392px;width:8px;height:8px;border:1px solid #cfd3da;background:linear-gradient(135deg,#dcdfe5,#f6f7f9);"></div>
<svg style="left:449.5px;top:391.5px;" width="9" height="9" viewBox="0 0 9 9"><path d="M1.300 3.300 L3.500 5.600 L7.800 1 V3.900 L3.500 8.400 L1.300 6.100 Z" fill="#44558a"/></svg>
<div class="t" style="left:321px;top:409.0px;height:16px;line-height:16px;font-size:11px;color:#000;letter-spacing:-0.25px;white-space:nowrap;">Allow Renewals</div>
<div  style="left:448px;top:411px;width:12px;height:12px;border:1px solid #b4bcc8;background:#f4f5f7;"></div>
<div  style="left:450px;top:413px;width:8px;height:8px;border:1px solid #cfd3da;background:linear-gradient(135deg,#dcdfe5,#f6f7f9);"></div>
<div class="t" style="left:321px;top:430.0px;height:16px;line-height:16px;font-size:11px;color:#000;letter-spacing:-0.175px;white-space:nowrap;">Handle With Care</div>
<div  style="left:448px;top:432px;width:12px;height:12px;border:1px solid #b4bcc8;background:#f4f5f7;"></div>
<div  style="left:450px;top:434px;width:8px;height:8px;border:1px solid #cfd3da;background:linear-gradient(135deg,#dcdfe5,#f6f7f9);"></div>
<div class="t" style="left:321px;top:451.0px;height:16px;line-height:16px;font-size:11px;color:#000;letter-spacing:-0.111px;white-space:nowrap;">Copy With Care</div>
<div  style="left:448px;top:453px;width:12px;height:12px;border:1px solid #b4bcc8;background:#f4f5f7;"></div>
<div  style="left:450px;top:455px;width:8px;height:8px;border:1px solid #cfd3da;background:linear-gradient(135deg,#dcdfe5,#f6f7f9);"></div>
<div class="t" style="left:321px;top:472.0px;height:16px;line-height:16px;font-size:11px;color:#000;letter-spacing:-0.126px;white-space:nowrap;">Restricted Use</div>
<div  style="left:448px;top:474px;width:12px;height:12px;border:1px solid #b4bcc8;background:#f4f5f7;"></div>
<div  style="left:450px;top:476px;width:8px;height:8px;border:1px solid #cfd3da;background:linear-gradient(135deg,#dcdfe5,#f6f7f9);"></div>
<div  style="left:532px;top:335px;width:159px;height:155px;border:1px solid #7ea6dc;background:#fff;"></div>
<div  style="left:533px;top:336px;width:157px;height:19px;background:linear-gradient(#cfe2ff,#a9cbf7);border-bottom:1px solid #7ea6dc;"></div>
<div class="t" style="left:536px;top:338.0px;height:16px;line-height:16px;font-size:11px;color:#15428b;letter-spacing:-0.15px;white-space:nowrap;">Lending String</div>
<div  style="left:533px;top:355px;width:157px;height:134px;border:2px solid #e6eefa;border-top-width:1px;"></div>
<svg style="left:539px;top:416px;" width="12" height="12" viewBox="0 0 12 12"><circle cx="6" cy="6" r="5" fill="#f4f5f7" stroke="#9aa2b0" stroke-width="1"/><circle cx="6" cy="6" r="3.4" fill="#e2e5ea"/><circle cx="6" cy="6" r="2.600" fill="#2f6fd0" stroke="#1d4fa0" stroke-width="0.6"/><circle cx="5.300" cy="5.300" r="0.9" fill="#9cc8ff"/></svg>
<div class="t" style="left:553px;top:414.0px;height:16px;line-height:16px;font-size:11px;color:#000;letter-spacing:-0.5px;white-space:nowrap;">TRNAB</div>
<div class="t" style="left:15.5px;top:494.0px;height:16px;line-height:16px;font-size:11px;color:#000;letter-spacing:0.031px;white-space:nowrap;">Title</div>
<div class="t" style="left:15.5px;top:517.0px;height:16px;line-height:16px;font-size:11px;color:#000;letter-spacing:0.196px;white-space:nowrap;">Author</div>
<div class="t" style="left:15.5px;top:540.0px;height:16px;line-height:16px;font-size:11px;color:#000;letter-spacing:-0.173px;white-space:nowrap;">Edition</div>
<div  style="left:148px;top:492px;width:246px;height:20px;border:1px solid #abc1de;background:#fff;"></div>
<div class="t" style="left:150.4px;top:494.0px;height:16px;line-height:16px;font-size:11px;color:#000;letter-spacing:-0.009px;white-space:nowrap;">Harry Potter and the prisoner of Azkaban</div>
<div  style="left:148px;top:515px;width:246px;height:20px;border:1px solid #abc1de;background:#fff;"></div>
<div class="t" style="left:150.4px;top:517.0px;height:16px;line-height:16px;font-size:11px;color:#000;letter-spacing:0.123px;white-space:nowrap;">Rowling, J. K., author.</div>
<div  style="left:148px;top:538px;width:57px;height:20px;border:1px solid #abc1de;background:#fff;"></div>
<div class="t" style="left:208px;top:540.0px;height:16px;line-height:16px;font-size:11px;color:#000;letter-spacing:0.083px;white-space:nowrap;">Date</div>
<div  style="left:289px;top:538px;width:105px;height:20px;border:1px solid #abc1de;background:#fff;"></div>
<div class="t" style="left:292px;top:540.0px;height:16px;line-height:16px;font-size:11px;color:#000;letter-spacing:0px;white-space:nowrap;">2001</div>
<div class="t" style="left:397px;top:494.0px;height:16px;line-height:16px;font-size:11px;color:#000;letter-spacing:-0.295px;white-space:nowrap;">Article Exchange URL</div>
<div  style="left:530px;top:492px;width:159px;height:20px;border:1px solid #abc1de;background:#fff;"></div>
<div class="t" style="left:397px;top:517.0px;height:16px;line-height:16px;font-size:11px;color:#000;letter-spacing:-0.179px;white-space:nowrap;">Article Exchange Password</div>
<div  style="left:530px;top:515px;width:159px;height:20px;border:1px solid #abc1de;background:#fff;"></div>
<div class="t" style="left:397px;top:540.0px;height:16px;line-height:16px;font-size:11px;color:#000;letter-spacing:-0.182px;white-space:nowrap;">Inclusive Pages</div>
<div  style="left:530px;top:538px;width:159px;height:20px;border:1px solid #abc1de;background:#fff;"></div>
<div  style="left:16px;top:561px;width:673px;height:128px;border:1px solid #b4c9e8;border-top-color:#7ea6dc;background:#fff;"></div>
<div  style="left:17px;top:562px;width:671px;height:22px;background:linear-gradient(#fdfeff 0%,#f1f6fe 35%,#dce9fb 75%,#cfe0f8 100%);border-bottom:1px solid #7ea6dc;"></div>
<div class="t" style="left:20px;top:565.0px;height:16px;line-height:16px;font-size:11px;color:#000;letter-spacing:0.083px;white-space:nowrap;">Date</div>
<div class="t" style="left:145px;top:565.0px;height:16px;line-height:16px;font-size:11px;color:#000;letter-spacing:0.083px;white-space:nowrap;">Note</div>
<div class="t" style="left:523px;top:565.0px;height:16px;line-height:16px;font-size:11px;color:#000;letter-spacing:0.114px;white-space:nowrap;">Type</div>
<div class="t" style="left:605px;top:565.0px;height:16px;line-height:16px;font-size:11px;color:#000;letter-spacing:-0.243px;white-space:nowrap;">Added By</div>
<div  style="left:140px;top:562px;width:1px;height:21px;background:#8fb0e0;"></div>
<div  style="left:141px;top:562px;width:1px;height:21px;background:#fff;"></div>
<div  style="left:518px;top:562px;width:1px;height:21px;background:#8fb0e0;"></div>
<div  style="left:519px;top:562px;width:1px;height:21px;background:#fff;"></div>
<div  style="left:600px;top:562px;width:1px;height:21px;background:#8fb0e0;"></div>
<div  style="left:601px;top:562px;width:1px;height:21px;background:#fff;"></div>
<svg style="left:503px;top:568px;" width="11" height="7" viewBox="0 0 11 7"><path d="M0.8 6 L5.500 1 L10.200 6 Z" fill="#9cc0f0"/></svg>
<div  style="left:693px;top:337px;width:300px;height:221px;border:1px solid #6f9bd8;background:#e3efff;"></div>
<div  style="left:694px;top:338px;width:298px;height:219px;background:#fff;"></div>
<div  style="left:695px;top:339px;width:296px;height:1px;background:#9dbbe6;"></div>
<div  style="left:695px;top:339px;width:1px;height:42px;background:#9dbbe6;"></div>
<div  style="left:696px;top:340px;width:294px;height:22px;background:linear-gradient(#fdfeff 0%,#f1f6fe 35%,#dce9fb 75%,#cfe0f8 100%);border-bottom:1px solid #9ab8e0;"></div>
<div  style="left:696px;top:362px;width:294px;height:19px;background:#7b96dc;"></div>
<div class="t" style="left:699px;top:343.0px;height:16px;line-height:16px;font-size:11px;color:#000;letter-spacing:-0.15px;white-space:nowrap;overflow:hidden;width:70px;text-align:left;">Lender String</div>
<div class="t" style="left:698px;top:363.0px;height:16px;line-height:16px;font-size:11px;color:#fff;letter-spacing:-0.5px;white-space:nowrap;">TRNAB</div>
<div  style="left:769px;top:340px;width:1px;height:21px;background:#a4bfe2;"></div>
<div  style="left:770px;top:340px;width:1px;height:21px;background:#fff;"></div>
<div  style="left:769px;top:362px;width:1px;height:19px;background:#e3efff;"></div>
<div class="t" style="left:774px;top:343.0px;height:16px;line-height:16px;font-size:11px;color:#000;letter-spacing:-0.15px;white-space:nowrap;overflow:hidden;width:70px;text-align:left;">Address N<span style="letter-spacing:0.9px">...</span></div>
<div class="t" style="left:772px;top:363.0px;height:16px;line-height:16px;font-size:11px;color:#fff;letter-spacing:0px;white-space:nowrap;width:70px;text-align:right;">1</div>
<div  style="left:844px;top:340px;width:1px;height:21px;background:#a4bfe2;"></div>
<div  style="left:845px;top:340px;width:1px;height:21px;background:#fff;"></div>
<div  style="left:844px;top:362px;width:1px;height:19px;background:#e3efff;"></div>
<div class="t" style="left:849px;top:343.0px;height:16px;line-height:16px;font-size:11px;color:#000;letter-spacing:-0.15px;white-space:nowrap;overflow:hidden;width:70px;text-align:left;">NVTGC</div>
<div class="t" style="left:848px;top:363.0px;height:16px;line-height:16px;font-size:11px;color:#fff;letter-spacing:-0.2px;white-space:nowrap;">DEV</div>
<div  style="left:919px;top:340px;width:1px;height:21px;background:#a4bfe2;"></div>
<div  style="left:920px;top:340px;width:1px;height:21px;background:#fff;"></div>
<div  style="left:919px;top:362px;width:1px;height:19px;background:#e3efff;"></div>
<div class="t" style="left:924px;top:343.0px;height:16px;line-height:16px;font-size:11px;color:#000;letter-spacing:-0.15px;white-space:nowrap;overflow:hidden;width:66px;text-align:left;">Library Name</div>
<div class="t" style="left:923px;top:363.0px;height:16px;line-height:16px;font-size:11px;color:#fff;letter-spacing:-0.5px;white-space:nowrap;">TRNAB</div>
<div  style="left:694px;top:539px;width:298px;height:18px;background:#f0f0f0;border-top:1px solid #e6e6e6;"></div>
<svg style="left:699.5px;top:542.5px;" width="6" height="10" viewBox="0 0 6 10"><path d="M5.700 0.500 V9.500 L0.500 5 Z" fill="#47597d"/></svg>
<svg style="left:980.5px;top:542.5px;" width="6" height="10" viewBox="0 0 6 10"><path d="M0.300 0.500 V9.500 L5.500 5 Z" fill="#47597d"/></svg>
<div  style="left:712px;top:540px;width:21px;height:15px;border:1px solid #5a78a8;border-radius:2px;background:linear-gradient(#eef2f9,#d7e0ee 45%,#b9c8de 55%,#e1e8f3);box-shadow:inset 0 0 0 1px rgba(255,255,255,0.6);"></div>
<div  style="left:719px;top:544px;width:1px;height:7px;background:#4d6185;"></div>
<div  style="left:721px;top:544px;width:1px;height:7px;background:#4d6185;"></div>
<div  style="left:723px;top:544px;width:1px;height:7px;background:#4d6185;"></div>
<div  style="left:725px;top:544px;width:1px;height:7px;background:#4d6185;"></div>
<div  style="left:693px;top:561px;width:300px;height:126px;border:1px solid #6f9bd8;background:#e3efff;"></div>
<div class="t" style="left:697px;top:568.0px;height:16px;line-height:16px;font-size:11px;color:#000;letter-spacing:-0.155px;white-space:nowrap;">Due Date</div>
<div class="t" style="left:697px;top:591.0px;height:16px;line-height:16px;font-size:11px;color:#000;letter-spacing:-0.12px;white-space:nowrap;">Document Type</div>
<div class="t" style="left:697px;top:614.0px;height:16px;line-height:16px;font-size:11px;color:#000;letter-spacing:-0.249px;white-space:nowrap;">Number of Pieces</div>
<div class="t" style="left:697px;top:637.0px;height:16px;line-height:16px;font-size:11px;color:#000;letter-spacing:-0.115px;white-space:nowrap;">Notes/Special Ins.</div>
<div class="t" style="left:697px;top:660.0px;height:16px;line-height:16px;font-size:11px;color:#9a9ea6;letter-spacing:-0.351px;white-space:nowrap;">OCLC Status</div>
<div  style="left:788px;top:566px;width:200px;height:20px;border:1px solid #abc1de;background:#fff;"></div>
<svg style="left:973px;top:574px;" width="8" height="5" viewBox="0 0 8 5"><path d="M0 0 H8 L4 4.500 Z" fill="#3f6cb0"/></svg>
<div  style="left:788px;top:589px;width:200px;height:20px;border:1px solid #abc1de;background:#fff;"></div>
<div class="t" style="left:790.2px;top:591.0px;height:16px;line-height:16px;font-size:11px;color:#000;letter-spacing:-0.1px;white-space:nowrap;">Book</div>
<div  style="left:788px;top:612px;width:52px;height:20px;border:1px solid #abc1de;background:#fff;"></div>
<div class="t" style="left:791px;top:614.0px;height:16px;line-height:16px;font-size:11px;color:#000;letter-spacing:0px;white-space:nowrap;">1</div>
<div class="t" style="left:843px;top:614.0px;height:16px;line-height:16px;font-size:11px;color:#000;letter-spacing:-0.229px;white-space:nowrap;">Number of Pages</div>
<div  style="left:934px;top:612px;width:54px;height:20px;border:1px solid #abc1de;background:#fff;"></div>
<div class="t" style="left:937px;top:614.0px;height:16px;line-height:16px;font-size:11px;color:#000;letter-spacing:0px;white-space:nowrap;">1</div>
<div  style="left:788px;top:635px;width:200px;height:20px;border:1px solid #abc1de;background:#fff;"></div>
<div  style="left:788px;top:658px;width:200px;height:20px;border:1px solid #b4c4dc;background:#d9e4f4;"></div>
<svg style="left:973px;top:663px;" width="11" height="10" viewBox="0 0 11 10"><path d="M4.500 2.500 H3 Q1.500 2.500 1.500 4 V7 Q1.500 8.500 3 8.500 H4.500" fill="none" stroke="#8c8c8c" stroke-width="1.100"/><path d="M3.500 5 V3.800 H7.500" fill="none" stroke="#8c8c8c" stroke-width="1.100"/><path d="M6.300 1.300 L9.300 3.800 L6.300 6.300" fill="none" stroke="#8c8c8c" stroke-width="1.100"/></svg>
<div  style="left:8px;top:698px;width:996px;height:24px;background:linear-gradient(#dce9fc 0%,#cfe0fa 35%,#b4cff5 55%,#bdd5f8 75%,#cde0fb 100%);border-top:1px solid #4f7fc4;"></div>
<div class="t" style="left:12px;top:702.0px;height:16px;line-height:16px;font-size:11px;color:#15428b;letter-spacing:-0.365px;white-space:nowrap;">atlas/DEV</div>
<div  style="left:998px;top:707px;width:2px;height:2px;background:#fff;"></div>
<div  style="left:997px;top:706px;width:2px;height:2px;background:#5f8fd4;"></div>
<div  style="left:994px;top:711px;width:2px;height:2px;background:#fff;"></div>
<div  style="left:993px;top:710px;width:2px;height:2px;background:#5f8fd4;"></div>
<div  style="left:998px;top:711px;width:2px;height:2px;background:#fff;"></div>
<div  style="left:997px;top:710px;width:2px;height:2px;background:#5f8fd4;"></div>
<div  style="left:990px;top:715px;width:2px;height:2px;background:#fff;"></div>
<div  style="left:989px;top:714px;width:2px;height:2px;background:#5f8fd4;"></div>
<div  style="left:994px;top:715px;width:2px;height:2px;background:#fff;"></div>
<div  style="left:993px;top:714px;width:2px;height:2px;background:#5f8fd4;"></div>
<div  style="left:998px;top:715px;width:2px;height:2px;background:#fff;"></div>
<div  style="left:997px;top:714px;width:2px;height:2px;background:#5f8fd4;"></div>
</div>
</body></html>
